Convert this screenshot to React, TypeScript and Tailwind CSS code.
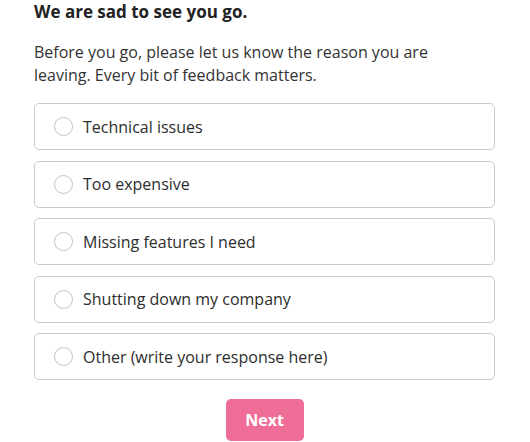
import { useState } from "react";

const reasons = [
  "Technical issues",
  "Too expensive",
  "Missing features I need",
  "Shutting down my company",
  "Other (write your response here)",
];

export default function App() {
  const [picked, setPicked] = useState<number | null>(null);

  return (
    <div className="min-h-screen bg-white px-[34px] font-['Open_Sans',sans-serif] text-[#333]">
      {/* Heading */}
      <h1 className="pt-[1px] text-[17px] font-bold leading-[22px] text-[#222]">
        We are sad to see you go.
      </h1>
      <p className="mt-[18px] max-w-[420px] text-[16px] leading-[23px] text-[#333]">
        Before you go, please let us know the reason you are leaving. Every bit of feedback matters.
      </p>

      {/* Options */}
      <div className="mt-[16px] flex w-[461px] flex-col gap-[10.5px]">
        {reasons.map((r, i) => (
          <label
            key={r}
            onClick={() => setPicked(i)}
            className="flex h-[47px] cursor-pointer items-center gap-[10px] rounded-[5px] border-[1.5px] border-[#cbcbcb] pl-[19px]"
          >
            <span className="flex h-[19px] w-[19px] items-center justify-center rounded-full border-[1.5px] border-[#c4c4c4]">
              {picked === i && <span className="h-[9px] w-[9px] rounded-full bg-[#ee6e98]" />}
            </span>
            <span className="text-[16px] text-[#2d2d2d]">{r}</span>
          </label>
        ))}
      </div>

      {/* Next */}
      <div className="mt-[19px] flex w-[461px] justify-center">
        <button className="h-[42px] w-[78px] rounded-[5px] bg-[#ee6e98] text-[16px] font-bold text-white">
          Next
        </button>
      </div>
    </div>
  );
}
